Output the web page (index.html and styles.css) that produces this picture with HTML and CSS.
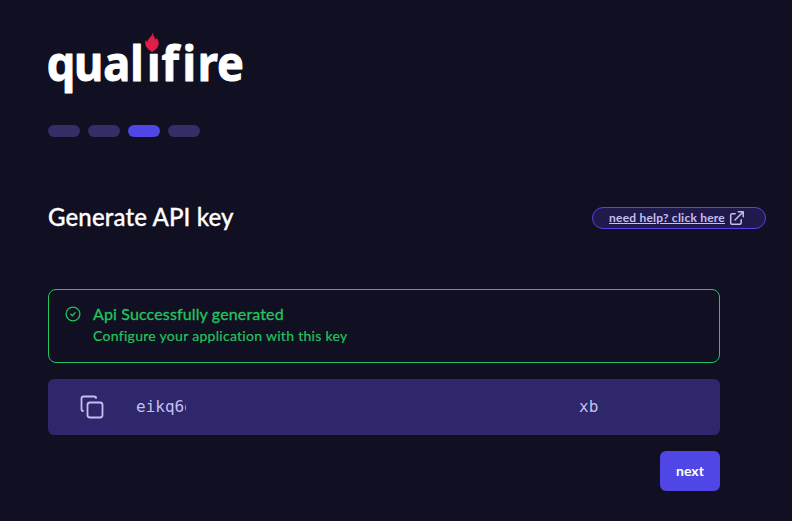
FILE: index.html
```html
<!DOCTYPE html>
<html lang="en">
<head>
<meta charset="utf-8">
<title>Generate API key</title>
<link rel="stylesheet" href="styles.css">
</head>
<body>
<main class="page">
  <svg class="logo" width="200" height="64" viewBox="46 32 200 64" role="img" aria-label="qualifire">
    <text class="wordmark" transform="scale(.92 1)" y="81" x="50.700 80.500 112.300 141.500 159.700 175.500 198.300 215 236">qualifire</text>
    <path class="cover" d="M146 32h13.500v21.500h-13.500z"/>
    <path class="flame" d="M152.700 33.200C152.400 37 147.300 38.500 147.600 42.600L145.700 40.700C144.500 46 148.300 49.500 152 51.700C156 49.500 158.700 47 158.300 42.500C158.200 40.500 157.500 39.500 156.700 38.600L155.200 40.300C155 37.500 152.600 36 152.700 33.200Z"/>
  </svg>
  <div class="steps">
    <span class="step"></span><span class="step"></span><span class="step active"></span><span class="step"></span>
  </div>
  <header class="heading">
    <h1>Generate API key</h1>
    <a class="help" href="#"><span>need help? click here</span>
      <svg width="16" height="16" viewBox="0 0 16 16"><path d="M6.200 3.700H3.200Q1.700 3.700 1.700 5.200V12.700Q1.700 14.200 3.200 14.200H10.700Q12.200 14.200 12.200 12.700V9.800M6 10L13.800 2.200M9.300 1.800H14.200V6.700"/></svg>
    </a>
  </header>
  <section class="content">
    <div class="alert">
      <svg width="16" height="16" viewBox="0 0 16 16"><circle cx="8" cy="8" r="6.900"/><path d="M5.800 8.200L7.300 9.700L10.200 6.600"/></svg>
      <div>
        <div class="alert-title">Api Successfully generated</div>
        <div class="alert-text">Configure your application with this key</div>
      </div>
    </div>
    <div class="key">
      <svg width="24" height="24" viewBox="0 0 24 24"><rect x="7.500" y="7.500" width="15" height="15" rx="2.500"/><path d="M3 16Q1.500 16 1.500 14V3.500Q1.500 1.500 3.500 1.500H14Q16 1.500 16 3"/></svg>
      <span class="key-start">eikq6d</span>
      <span class="key-end">xb</span>
    </div>
    <button class="next">next</button>
  </section>
</main>
</body>
</html>
```
FILE: styles.css
```css
* { box-sizing: border-box; }
body { margin: 0; background: #110f22; font-family: Lato, "Open Sans", sans-serif; color: #fff; }
.page { height: 521px; padding: 32px 26px 0 48px; overflow: hidden; }
.logo { display: block; margin-left: -2px; }
.wordmark { font: 700 49px "Noto Sans", sans-serif; fill: #fff; stroke: #fff; stroke-width: 1px; stroke-linejoin: round; }
.cover { fill: #110f22; }
.flame { fill: #e11d48; stroke: #e11d48; stroke-width: .6px; }
.steps { display: flex; gap: 8px; margin-top: 29px; }
.step { width: 32px; height: 12px; border-radius: 6px; background: #342e66; }
.step.active { background: #4f46e5; }
.heading { display: flex; align-items: center; justify-content: space-between; height: 40px; margin-top: 61px; }
h1 { margin: 0; padding-bottom: 2px; font-size: 24px; line-height: 36px; font-weight: 500; letter-spacing: .13px; -webkit-text-stroke: .3px #fff; }
.help { display: flex; align-items: center; gap: 4px; width: 174px; height: 22px; padding-left: 16px; border: 1px solid #4f46e5; border-radius: 11px; background: #1f1a4b; color: #c4bff0; font-size: 12px; font-weight: 700; letter-spacing: .23px; }
.help span { padding-bottom: 2px; }
.help svg, .alert svg, .key svg { fill: none; stroke: currentColor; stroke-linecap: round; stroke-linejoin: round; flex: none; }
.help svg { stroke-width: 1.5; }
.content { width: 672px; margin-top: 51px; }
.alert { display: flex; gap: 12px; height: 74px; padding: 16px; border: 1px solid #22c55e; border-radius: 8px; color: #22c55e; }
.alert svg { stroke-width: 1.3; }
.alert-title { margin-top: -1px; font-size: 16px; line-height: 17px; letter-spacing: .14px; -webkit-text-stroke: .3px #22c55e; }
.alert-text { margin-top: 4px; font-size: 14px; line-height: 20px; letter-spacing: .29px; -webkit-text-stroke: .2px #22c55e; }
.key { display: flex; align-items: center; height: 56px; margin-top: 16px; padding-left: 32px; border-radius: 6px; background: #2e276b; color: #c4bff0; font: 16px "DejaVu Sans Mono", monospace; }
.key svg { stroke-width: 1.8; }
.key span { padding-bottom: 2px; }
.key-start { width: 50px; margin-left: 32px; overflow: hidden; }
.key-end { margin-left: 393px; }
.next { display: block; width: 60px; height: 40px; margin: 16px 0 0 auto; padding: 0 0 2px; border: 0; border-radius: 6px; background: #4f46e5; color: #fff; font: 700 14px Lato, sans-serif; }
```
